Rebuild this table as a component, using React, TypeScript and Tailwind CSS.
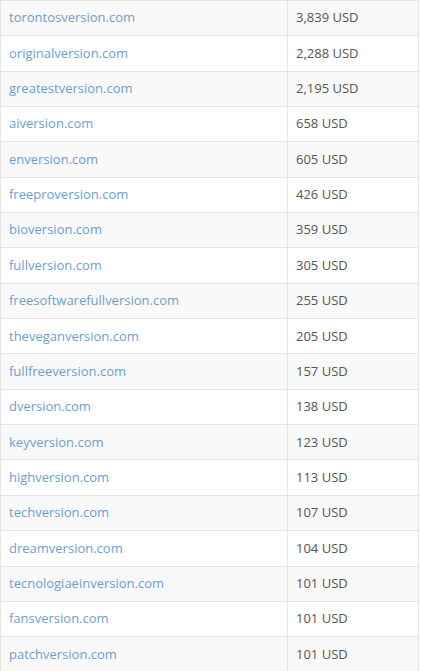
const domains: [string, string][] = [
  ["torontosversion.com", "3,839 USD"],
  ["originalversion.com", "2,288 USD"],
  ["greatestversion.com", "2,195 USD"],
  ["aiversion.com", "658 USD"],
  ["enversion.com", "605 USD"],
  ["freeproversion.com", "426 USD"],
  ["bioversion.com", "359 USD"],
  ["fullversion.com", "305 USD"],
  ["freesoftwarefullversion.com", "255 USD"],
  ["theveganversion.com", "205 USD"],
  ["fullfreeversion.com", "157 USD"],
  ["dversion.com", "138 USD"],
  ["keyversion.com", "123 USD"],
  ["highversion.com", "113 USD"],
  ["techversion.com", "107 USD"],
  ["dreamversion.com", "104 USD"],
  ["tecnologiaeinversion.com", "101 USD"],
  ["fansversion.com", "101 USD"],
  ["patchversion.com", "101 USD"],
];

export default function App() {
  return (
    <div className="w-[421px] h-[671px] overflow-hidden bg-white font-['Open_Sans',sans-serif] text-[13px]">
      <table className="w-[419px] border-collapse border border-[#e4e4e4]">
        <tbody>
          {domains.map(([name, price], i) => (
            <tr key={name} className={i % 2 === 0 ? "bg-[#f9f9f9]" : "bg-white"}>
              <td className="w-[287px] h-[35.35px] border border-[#e4e4e4] px-2 py-0 align-middle">
                <a href="#" className="text-[#6a9fd4]">
                  {name}
                </a>
              </td>
              <td className="h-[35.35px] border border-[#e4e4e4] px-2 py-0 align-middle text-[#555]">
                {price}
              </td>
            </tr>
          ))}
        </tbody>
      </table>
    </div>
  );
}
